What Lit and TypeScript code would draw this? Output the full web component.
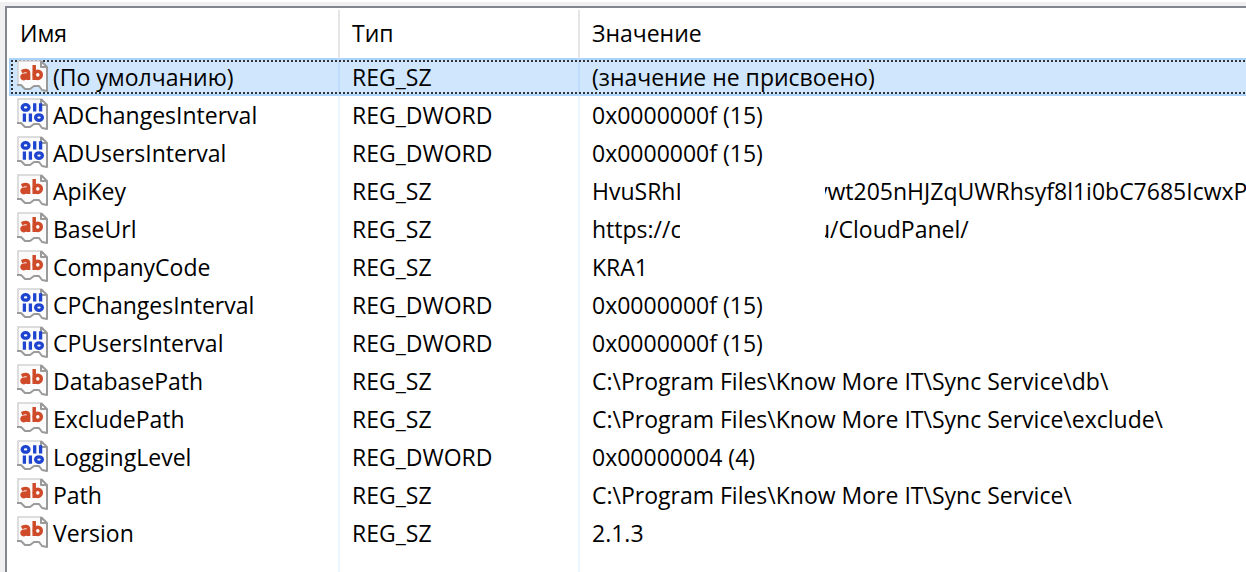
import { LitElement, html, svg, css, nothing } from "lit";
import { customElement, property } from "lit/decorators.js";

type Kind = "REG_SZ" | "REG_DWORD";

interface Entry {
  name: string;
  kind: Kind;
  value: string;
  /** Rest of the value, shown after the redacted middle. */
  tail?: string;
}

const ENTRIES: Entry[] = [
  { name: "(По умолчанию)", kind: "REG_SZ", value: "(значение не присвоено)" },
  { name: "ADChangesInterval", kind: "REG_DWORD", value: "0x0000000f (15)" },
  { name: "ADUsersInterval", kind: "REG_DWORD", value: "0x0000000f (15)" },
  { name: "ApiKey", kind: "REG_SZ", value: "HvuSRhI", tail: "ywt205nHJZqUWRhsyf8l1i0bC7685IcwxPc" },
  { name: "BaseUrl", kind: "REG_SZ", value: "https://c", tail: "u/CloudPanel/" },
  { name: "CompanyCode", kind: "REG_SZ", value: "KRA1" },
  { name: "CPChangesInterval", kind: "REG_DWORD", value: "0x0000000f (15)" },
  { name: "CPUsersInterval", kind: "REG_DWORD", value: "0x0000000f (15)" },
  { name: "DatabasePath", kind: "REG_SZ", value: "C:\\Program Files\\Know More IT\\Sync Service\\db\\" },
  { name: "ExcludePath", kind: "REG_SZ", value: "C:\\Program Files\\Know More IT\\Sync Service\\exclude\\" },
  { name: "LoggingLevel", kind: "REG_DWORD", value: "0x00000004 (4)" },
  { name: "Path", kind: "REG_SZ", value: "C:\\Program Files\\Know More IT\\Sync Service\\" },
  { name: "Version", kind: "REG_SZ", value: "2.1.3" },
];

@customElement("value-icon")
export class ValueIcon extends LitElement {
  @property() kind: Kind = "REG_SZ";

  static styles = css`
    :host { display: block; width: 32px; height: 34px; }
    .icon { display: block; width: 32px; height: 34px; }
    .sheet { fill: #fbfbfb; }
    .edge { fill: none; stroke: #d2d2d2; stroke-width: 1.5; }
    .shade { fill: none; stroke: #9a9a9a; stroke-width: 2; stroke-linejoin: round; }
    .letters { fill: none; stroke: #cf4a28; stroke-width: 3.5; }
    .bits { fill: none; stroke: #1f45d0; stroke-width: 3.3; }
  `;

  render() {
    return html`<svg class="icon" viewBox="0 0 32 34" aria-hidden="true">
      <path class="sheet" d="M1 1H24L30 7V31L25 30L22 26H17L13 29H8L4 25H1Z" />
      <path class="edge" d="M1 25V1H24" />
      <path class="shade" d="M24 1V7H30M24 1L30 7V31L25 30L22 26H17L13 29H8L4 25H0" />
      ${this.kind === "REG_SZ"
        ? svg`<g class="letters">
            <path d="M4.6 11.6Q11.6 9 11.6 13.2V20M11.6 15Q5 14.4 5 17Q5.2 18.9 7.4 18.6Q10 18.2 11.6 16.4" />
            <path d="M17.2 5V20" />
            <ellipse cx="20.8" cy="14.8" rx="3.5" ry="3.6" />
          </g>`
        : svg`<g class="bits">
            <ellipse cx="8.6" cy="9.4" rx="3.4" ry="2.8" />
            <path d="M17.7 5.2V13.6M23.6 5.2V13.6M7.4 15.4V23.8M13.4 15.4V23.8" />
            <ellipse cx="22" cy="19.6" rx="3.4" ry="2.8" />
          </g>`}
    </svg>`;
  }
}

@customElement("app-root")
export class AppRoot extends LitElement {
  static styles = css`
    :host {
      display: flex;
      flex-direction: column;
      box-sizing: border-box;
      min-height: 100vh;
      border-top: 2px solid #fff;
      padding: 4px 0 0 5px;
      overflow: hidden;
      background: #f0f0f0;
      color: #000;
      font: 23px/38px "Open Sans", "Noto Sans", sans-serif;
    }
    .pane {
      flex: 1;
      border: solid #828790;
      border-width: 2px 0 0 2px;
      background:
        linear-gradient(#edf5fd, #edf5fd) 331px 0 / 2px 100% no-repeat,
        linear-gradient(#edf5fd, #edf5fd) 571px 0 / 2px 100% no-repeat,
        #fff;
    }
    .list {
      width: 100%;
      table-layout: fixed;
      border-collapse: separate;
      border-spacing: 0;
    }
    .name-col { width: 333px; }
    .kind-col { width: 240px; }
    .heading {
      height: 50px;
      box-sizing: border-box;
      padding: 0 0 0 12px;
      text-align: left;
      font-weight: 400;
      background: linear-gradient(#e5e5e5, #e5e5e5) right bottom / 2px 48px no-repeat, #fff;
    }
    .heading:first-child { padding-left: 13px; }
    .heading:last-child { background: none; }
    .cell {
      height: 38px;
      padding: 0 0 0 12px;
      white-space: nowrap;
      overflow: hidden;
    }
    .cell:first-child { padding-left: 10px; }
    .entry { display: flex; height: 38px; gap: 4px; }
    .glyph { flex: none; padding-top: 2px; }
    .selected {
      background:
        repeating-linear-gradient(90deg, #333 0 2px, transparent 2px 4px) 4px 2px / 100% 2px no-repeat,
        repeating-linear-gradient(90deg, #333 0 2px, transparent 2px 4px) 4px 34px / 100% 2px no-repeat,
        repeating-linear-gradient(#333 0 2px, transparent 2px 4px) 4px 2px / 2px 34px no-repeat,
        linear-gradient(#bfdcfa, #bfdcfa) 331px 0 / 2px 100% no-repeat,
        linear-gradient(#bfdcfa, #bfdcfa) 571px 0 / 2px 100% no-repeat,
        linear-gradient(#d0e6fd, #d0e6fd) 4px 2px / 100% 34px no-repeat,
        #a9d3fa;
    }
    .selected .cell:first-child {
      border-left: 2px solid #fff;
      padding-left: 8px;
    }
    .redacted { display: flex; }
    .head { flex: none; width: 88px; overflow: hidden; }
    .tail { flex: 1; margin-left: 145px; overflow: hidden; text-indent: -9px; }
  `;

  private renderValue(entry: Entry) {
    if (!entry.tail) return entry.value;
    return html`<div class="redacted">
      <span class="head">${entry.value}</span><span class="tail">${entry.tail}</span>
    </div>`;
  }

  render() {
    return html`<main class="pane">
      <table class="list">
        <colgroup>
          <col class="name-col" />
          <col class="kind-col" />
          <col />
        </colgroup>
        <thead>
          <tr>
            <th class="heading" scope="col">Имя</th>
            <th class="heading" scope="col">Тип</th>
            <th class="heading" scope="col">Значение</th>
          </tr>
        </thead>
        <tbody>
          ${ENTRIES.map(
            (entry, i) => html`<tr class=${i === 0 ? "selected" : nothing}>
              <td class="cell">
                <div class="entry"><value-icon class="glyph" .kind=${entry.kind}></value-icon><span>${entry.name}</span></div>
              </td>
              <td class="cell">${entry.kind}</td>
              <td class="cell">${this.renderValue(entry)}</td>
            </tr>`
          )}
        </tbody>
      </table>
    </main>`;
  }
}
